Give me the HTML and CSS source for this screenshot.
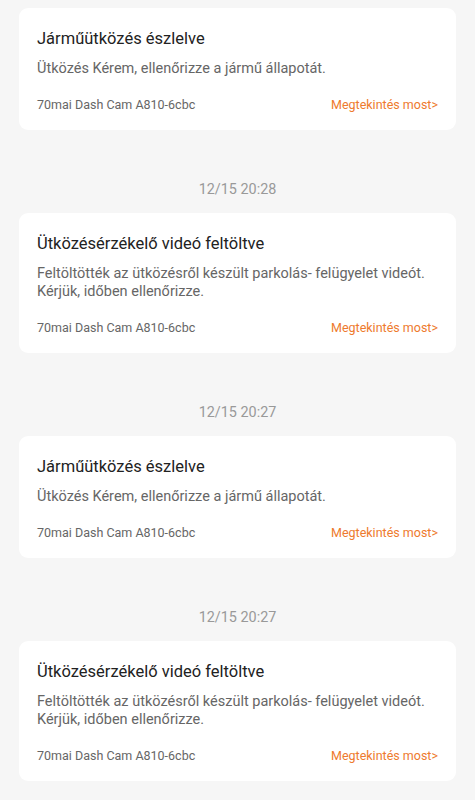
FILE: index.html
```html
<!DOCTYPE html>
<html>
<head>
  <meta charset="utf-8">
  <title>Üzenetek</title>
  <link rel="stylesheet" href="styles.css">
</head>
<body>
  <div class="list">

    <div class="card">
      <div class="card-title">Járműütközés észlelve</div>
      <div class="card-text">Ütközés Kérem, ellenőrizze a jármű állapotát.</div>
      <div class="card-foot">
        <span class="device">70mai Dash Cam A810-6cbc</span>
        <a class="view-link" href="#">Megtekintés most&gt;</a>
      </div>
    </div>

    <div class="time">12/15 20:28</div>
    <div class="card">
      <div class="card-title">Ütközésérzékelő videó feltöltve</div>
      <div class="card-text">Feltöltötték az ütközésről készült parkolás- felügyelet videót. Kérjük, időben ellenőrizze.</div>
      <div class="card-foot">
        <span class="device">70mai Dash Cam A810-6cbc</span>
        <a class="view-link" href="#">Megtekintés most&gt;</a>
      </div>
    </div>

    <div class="time">12/15 20:27</div>
    <div class="card">
      <div class="card-title">Járműütközés észlelve</div>
      <div class="card-text">Ütközés Kérem, ellenőrizze a jármű állapotát.</div>
      <div class="card-foot">
        <span class="device">70mai Dash Cam A810-6cbc</span>
        <a class="view-link" href="#">Megtekintés most&gt;</a>
      </div>
    </div>

    <div class="time">12/15 20:27</div>
    <div class="card">
      <div class="card-title">Ütközésérzékelő videó feltöltve</div>
      <div class="card-text">Feltöltötték az ütközésről készült parkolás- felügyelet videót. Kérjük, időben ellenőrizze.</div>
      <div class="card-foot">
        <span class="device">70mai Dash Cam A810-6cbc</span>
        <a class="view-link" href="#">Megtekintés most&gt;</a>
      </div>
    </div>

  </div>
</body>
</html>
```

FILE: styles.css
```css
/* General styles */
* {
  box-sizing: border-box;
}

body {
  margin: 0;
  padding: 0;
  background-color: #f6f6f6;
  font-family: Roboto, "Noto Sans", sans-serif;
}

.list {
  padding: 8px 19px 20px;
}

.time {
  margin: 50px 0 13px;
  text-align: center;
  font-size: 14.4px;
  line-height: 20px;
  color: #999;
}

.card {
  background-color: #fff;
  border-radius: 9px;
  padding: 20px 18px 16px;
}

.card-title {
  font-size: 16.5px;
  line-height: 22px;
  color: #222;
}

.card-text {
  margin-top: 10px;
  font-size: 14.5px;
  line-height: 18px;
  color: #666;
}

.card-foot {
  display: flex;
  justify-content: space-between;
  align-items: center;
  margin-top: 18px;
  font-size: 12.5px;
  line-height: 18px;
}

.device {
  color: #666;
}

.view-link {
  color: #ee7a2e;
  text-decoration: none;
}
```
